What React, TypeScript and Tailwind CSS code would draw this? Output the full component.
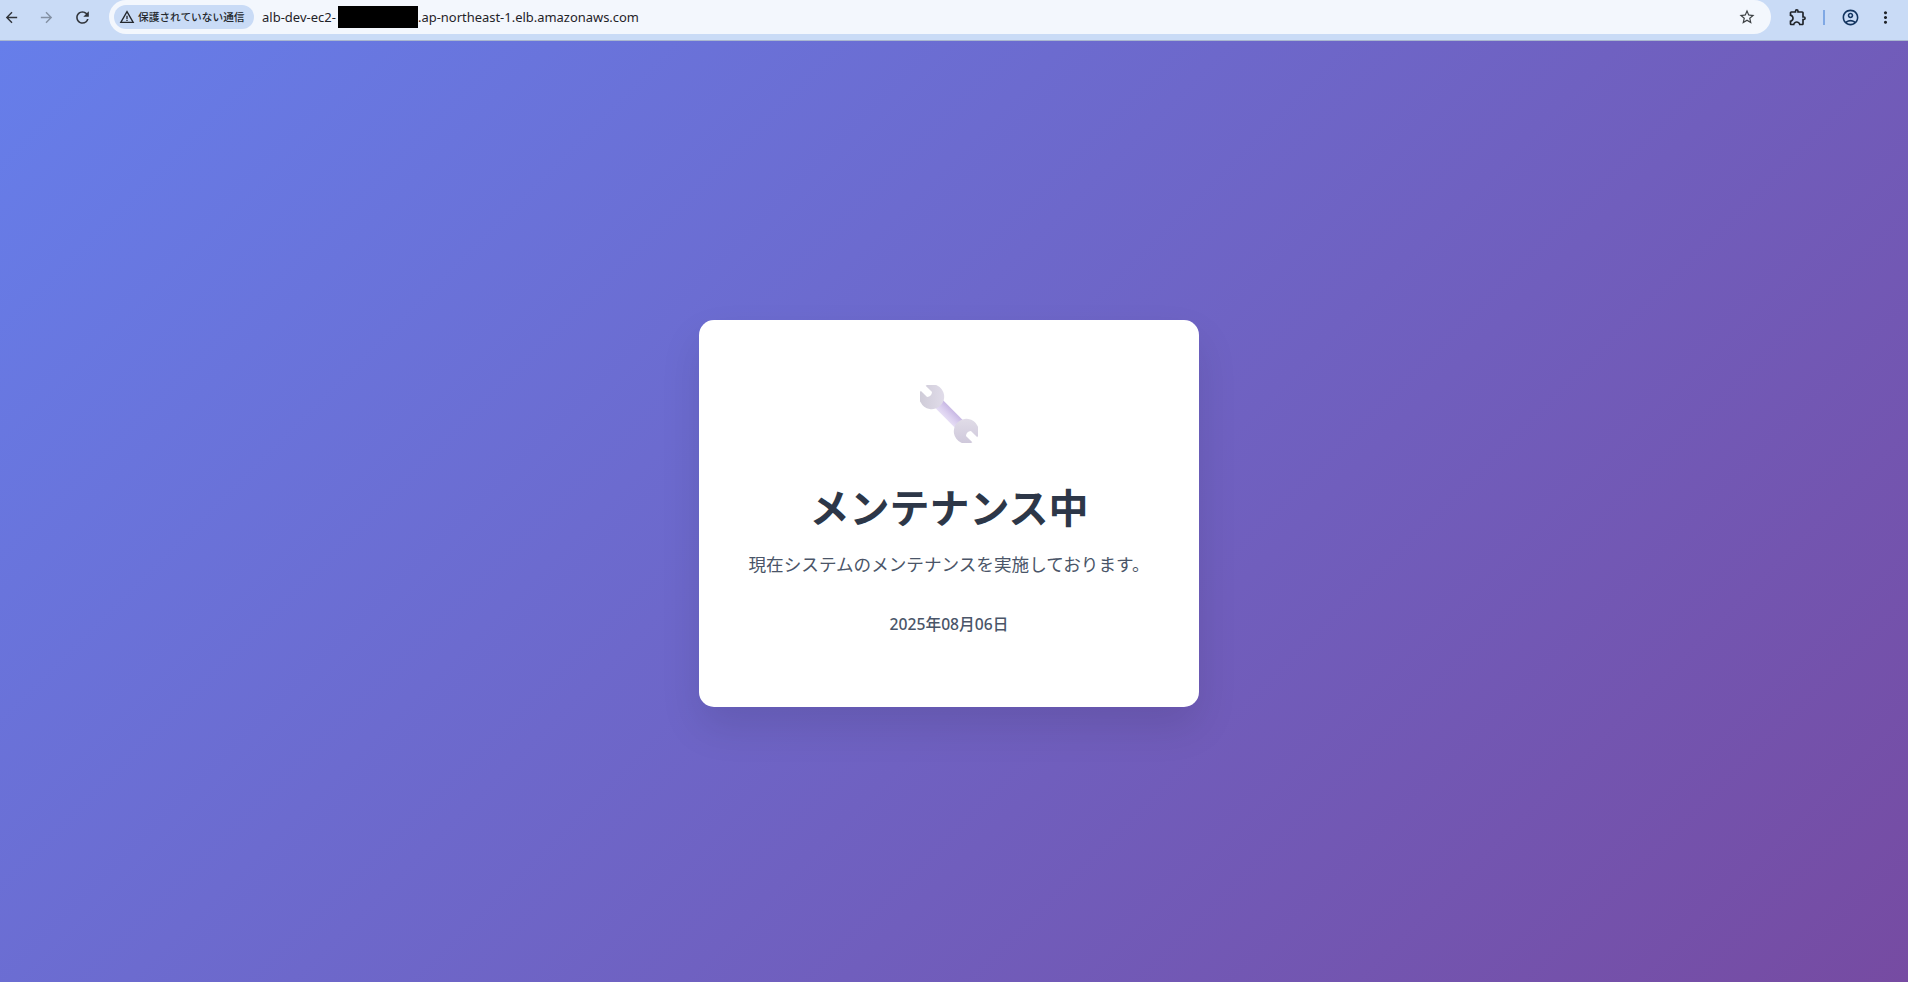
import { MdArrowBack, MdArrowForward, MdRefresh, MdStarBorder, MdOutlineExtension, MdOutlineAccountCircle, MdMoreVert, MdWarningAmber } from "react-icons/md";

function Wrench() {
  return (
    <svg width="58" height="58" viewBox="0 0 58 58" aria-hidden="true">
      <defs>
        <linearGradient id="head" x1="0" y1="0" x2="1" y2="1">
          <stop offset="0" stopColor="#cbc8d4" />
          <stop offset="1" stopColor="#e4dfed" />
        </linearGradient>
        <linearGradient id="head2" x1="1" y1="0" x2="0" y2="1">
          <stop offset="0" stopColor="#e4e0ea" />
          <stop offset="1" stopColor="#cbc4d8" />
        </linearGradient>
        <linearGradient id="shaft" x1="0" y1="0" x2="1" y2="0">
          <stop offset="0" stopColor="#e6def5" />
          <stop offset="0.5" stopColor="#d9cdee" />
          <stop offset="1" stopColor="#c8b8e4" />
        </linearGradient>
      </defs>
      <g transform="translate(29 29) rotate(-45)">
        <rect x="-5.5" y="-16" width="11" height="32" fill="url(#shaft)" />
        <path d="M-3.5 -36.5 L-3.5 -27.5 Q0 -24.5 3.5 -27.5 L3.5 -36.5 A12.5 12.5 0 1 1 -3.5 -36.5 Z" fill="url(#head)" />
        <path d="M-3.5 36.5 L-3.5 27.5 Q0 24.5 3.5 27.5 L3.5 36.5 A12.5 12.5 0 1 0 -3.5 36.5 Z" fill="url(#head2)" />
      </g>
    </svg>
  );
}

export default function App() {
  return (
    <div className="flex h-[982px] w-[1908px] flex-col overflow-hidden font-['Noto_Sans','Noto_Sans_CJK_JP',sans-serif]">
      <header className="flex h-[41px] shrink-0 items-start border-b border-[#a9b7d0] bg-[#c9dbf6]">
        <div className="flex h-[34px] w-[109px] shrink-0 items-center text-[#3c4043]">
          <MdArrowBack className="ml-[3px] text-[17px] text-[#30343a]" />
          <MdArrowForward className="ml-[18px] text-[17px] text-[#8390a3]" />
          <MdRefresh className="ml-[18px] text-[19px] text-[#30343a]" />
        </div>
        <div className="flex h-[34px] w-[1662px] shrink-0 items-center rounded-full bg-[#f3f7fd] pl-[5px]">
          <div className="flex h-[24px] w-[140px] shrink-0 items-center rounded-full bg-[#c9dbf6] pl-[5px] text-[10.7px] font-medium text-[#24282d]">
            <MdWarningAmber className="text-[16px]" />
            <span className="ml-[3px] whitespace-nowrap">保護されていない通信</span>
          </div>
          <span className="ml-[8px] w-[76px] shrink-0 overflow-hidden whitespace-nowrap pt-[2px] text-[13px] text-[#1f2328]">alb-dev-ec2-</span>
          <span className="h-[22px] w-[80px] shrink-0 bg-black" />
          <span className="whitespace-nowrap pt-[2px] text-[12.95px] text-[#1f2328]">.ap-northeast-1.elb.amazonaws.com</span>
          <MdStarBorder className="ml-auto mr-[15px] text-[18px] text-[#3c4043]" />
        </div>
        <div className="flex h-[34px] flex-1 items-center">
          <MdOutlineExtension className="ml-[17px] text-[20px] text-[#1f2328]" />
          <span className="ml-[15px] h-[15px] w-[2px] bg-[#7fa8e4]" />
          <MdOutlineAccountCircle className="ml-[16px] text-[19px] text-[#12345f]" />
          <MdMoreVert className="ml-[16px] text-[19px] text-[#1f2328]" />
        </div>
      </header>
      <main className="flex flex-1 items-center justify-center bg-[linear-gradient(135deg,#667eea_0%,#764ba2_100%)] pr-[10px] pt-[3px]">
        <div className="flex h-[387px] w-[500px] flex-col items-center rounded-[15px] bg-white pt-[65px] shadow-[0_20px_40px_rgba(0,0,0,0.1)]">
          <Wrench />
          <h1 className="mt-[36px] text-[40px] leading-[58px] font-bold text-[#2d3748]">メンテナンス中</h1>
          <p className="mt-[13px] text-[17.6px] leading-[28px] text-[#4a5568]">現在システムのメンテナンスを実施しております。</p>
          <p className="mt-[35px] text-[15.7px] leading-[22px] font-medium text-[#4a5568]">2025年08月06日</p>
        </div>
      </main>
    </div>
  );
}
